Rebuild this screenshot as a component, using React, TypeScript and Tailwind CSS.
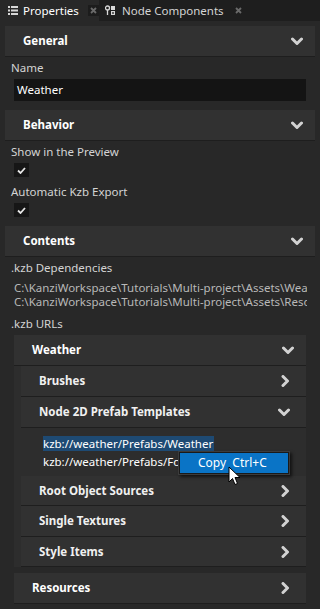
const font = { fontFamily: '"Noto Sans", "Open Sans", sans-serif' };

function ChevronDown() {
  return (
    <svg width="12" height="9" viewBox="0 0 12 9" className="shrink-0">
      <polyline points="1.5,2 6,6.5 10.5,2" fill="none" stroke="#d2d2d2" strokeWidth="3" strokeLinecap="round" strokeLinejoin="round" />
    </svg>
  );
}

function ChevronRight() {
  return (
    <svg width="9" height="12" viewBox="0 0 9 12" className="shrink-0">
      <polyline points="2,1.5 6.5,6 2,10.5" fill="none" stroke="#d2d2d2" strokeWidth="3" strokeLinecap="round" strokeLinejoin="round" />
    </svg>
  );
}

function CloseX({ boxed }: { boxed?: boolean }) {
  return (
    <span className={`flex h-[11px] w-[11px] items-center justify-center ${boxed ? "bg-[#1c1c1c]" : ""}`}>
      <svg width="7" height="7" viewBox="0 0 7 7">
        <path d="M1 1 L6 6 M6 1 L1 6" stroke="#6a6a6a" strokeWidth="1.8" />
      </svg>
    </span>
  );
}

function Check() {
  return (
    <div className="ml-[14px] flex h-[14px] w-[15px] items-center justify-center bg-[#161616]">
      <svg width="9" height="7" viewBox="0 0 9 7">
        <polyline points="1,3.5 3.5,6 8,1" fill="none" stroke="#e6e6e6" strokeWidth="1.8" />
      </svg>
    </div>
  );
}

function Label({ text, className = "" }: { text: string; className?: string }) {
  return <div className={`flex h-[22px] items-center px-[11px] ${className}`}>{text}</div>;
}

function SectionHeader({ title }: { title: string }) {
  return (
    <div className="mx-[5px] flex h-[31px] items-center justify-between border-b border-[#1e1e1e] bg-[#313131] pl-[18px] pr-[12px]">
      <span className="font-bold text-white">{title}</span>
      <ChevronDown />
    </div>
  );
}

function SubRow({ title, open, h = "h-[31px]" }: { title: string; open?: boolean; h?: string }) {
  return (
    <div className={`ml-[7px] flex ${h} items-center justify-between border-b border-[#1e1e1e] bg-[#313131] pl-[18px] pr-[16px]`}>
      <span className="font-bold text-[#f0f0f0]">{title}</span>
      {open ? <ChevronDown /> : <ChevronRight />}
    </div>
  );
}

export default function App() {
  return (
    <div className="h-[609px] w-[320px] overflow-hidden bg-[#282828] text-[11.5px] leading-[16px] text-[#d4d4d4]" style={font}>
      {/* Tabs */}
      <div className="flex h-[21px] bg-[#1e1e1e]">
        <div className="flex w-[99px] items-center bg-[#282828] pl-[8px]">
          <svg width="10" height="9" viewBox="0 0 10 9" className="mr-[5px]">
            <rect x="0" y="0" width="2" height="2" fill="#d8d8d8" />
            <rect x="3" y="0" width="7" height="2" fill="#d8d8d8" />
            <rect x="0" y="3.5" width="2" height="2" fill="#d8d8d8" />
            <rect x="3" y="3.5" width="7" height="2" fill="#d8d8d8" />
            <rect x="0" y="7" width="2" height="2" fill="#d8d8d8" />
            <rect x="3" y="7" width="7" height="2" fill="#d8d8d8" />
          </svg>
          <span className="text-white">Properties</span>
          <span className="ml-[9px]"><CloseX boxed /></span>
        </div>
        <div className="flex items-center pl-[6px]">
          <svg width="11" height="11" viewBox="0 0 11 11" className="mr-[6px]">
            <circle cx="2.5" cy="3" r="2" fill="none" stroke="#d8d8d8" strokeWidth="1.3" />
            <path d="M2.5 5 V10" stroke="#d8d8d8" strokeWidth="1.3" />
            <rect x="6" y="1" width="4" height="4" fill="#d8d8d8" />
            <rect x="6.6" y="6.6" width="2.8" height="2.8" fill="none" stroke="#d8d8d8" strokeWidth="1.2" />
          </svg>
          <span>Node Components</span>
          <span className="ml-[9px]"><CloseX /></span>
        </div>
      </div>

      <div className="pt-[5px]">
        <SectionHeader title="General" />
        <Label text="Name" />
        <div className="mx-[14px] flex h-[22px] items-center bg-[#141414] px-[3px] text-white">Weather</div>

        <div className="mt-[9px]"><SectionHeader title="Behavior" /></div>
        <Label text="Show in the Preview" />
        <Check />
        <Label text="Automatic Kzb Export" className="mt-[4px]" />
        <Check />

        <div className="mt-[9px]"><SectionHeader title="Contents" /></div>
        <Label text=".kzb Dependencies" />
        <div className="mr-[13px] mt-[2px] overflow-hidden whitespace-nowrap pl-[14px] leading-[14px] text-[#b8b8b8]">
          <div>C:\KanziWorkspace\Tutorials\Multi-project\Assets\Weather</div>
          <div>C:\KanziWorkspace\Tutorials\Multi-project\Assets\Resources</div>
        </div>
        <Label text=".kzb URLs" className="mt-[4px]" />

        <div className="mx-[14px] bg-[#2d2d2d]">
          <div className="flex h-[31px] items-center justify-between border-b border-[#1e1e1e] bg-[#313131] pl-[18px] pr-[12px]">
            <span className="font-bold text-white">Weather</span>
            <ChevronDown />
          </div>
          <SubRow title="Brushes" />
          <SubRow title="Node 2D Prefab Templates" open />
          <div className="relative ml-[7px] h-[48px] bg-[#2d2d2d] pl-[22px] pt-[7px] leading-[18px] text-white">
            <div><span className="bg-[#1e4a73] pr-[1px]">kzb://weather/Prefabs/Weather</span></div>
            <div className="whitespace-nowrap">kzb://weather/Prefabs/Forecast</div>

            {/* Context menu */}
            <div className="absolute left-[157px] top-[23px] border border-[#3c3c3c] bg-[#1a1a1a] p-[1px] shadow-[2px_2px_3px_rgba(0,0,0,0.6)]">
              <div className="flex h-[20px] w-[108px] items-center bg-[#0a74c6] pl-[18px] text-[12px] text-white">
                Copy&nbsp;&nbsp;Ctrl+C
              </div>
            </div>
            {/* Cursor */}
            <svg width="13" height="20" viewBox="0 0 13 20" className="absolute left-[207px] top-[38px]">
              <path d="M1 1 L1 16 L4.5 12.5 L7 18.5 L9.5 17.5 L7 11.5 L12 11.5 Z" fill="#ffffff" stroke="#000000" strokeWidth="1" />
            </svg>
          </div>
          <SubRow title="Root Object Sources" h="h-[30px]" />
          <SubRow title="Single Textures" h="h-[31px]" />
          <SubRow title="Style Items" h="h-[30px]" />
        </div>

        <div className="mx-[14px] mt-[6px] flex h-[31px] items-center justify-between border-b border-[#1e1e1e] bg-[#313131] pl-[18px] pr-[16px]">
          <span className="font-bold text-white">Resources</span>
          <ChevronRight />
        </div>
      </div>
    </div>
  );
}
